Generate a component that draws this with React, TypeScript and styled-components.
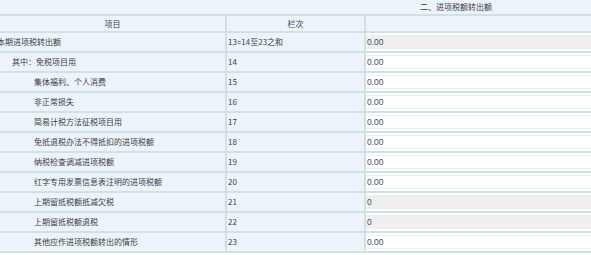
import React from "react";
import styled, { createGlobalStyle } from "styled-components";

const Global = createGlobalStyle`
  html, body { margin: 0; padding: 0; background: #ffffff; overflow: hidden; }
  body { font-family: "Noto Sans CJK SC", "Microsoft YaHei", sans-serif; }
`;

const Page = styled.div`
  width: 591px;
  height: 255px;
  overflow: hidden;
`;

const Table = styled.div`
  width: 912px;
  display: grid;
  grid-template-columns: 227px 139px 1fr;
  font-size: 8px;
  color: #3c3c3c;
  line-height: 1;
`;

const TitleCell = styled.div`
  grid-column: 1 / 4;
  height: 14px;
  border-bottom: 2px solid #cfe2e2;
  background: #edf4fb;
  display: flex;
  align-items: center;
  justify-content: center;
`;

const HeadCell = styled.div<{ $last?: boolean }>`
  height: 15px;
  border-bottom: 2px solid #cfe2e2;
  border-right: ${(p) => (p.$last ? "none" : "2px solid #cfe2e2")};
  background: #edf4fb;
  display: flex;
  align-items: center;
  justify-content: center;
`;

const LabelCell = styled.div<{ $indent: number }>`
  height: 18px;
  border-bottom: 2px solid #cfe2e2;
  border-right: 2px solid #cfe2e2;
  background: #edf4fb;
  display: flex;
  align-items: center;
  padding-left: ${(p) => p.$indent}px;
  white-space: nowrap;
  overflow: hidden;
`;

const NumCell = styled.div`
  height: 18px;
  border-bottom: 2px solid #cfe2e2;
  border-right: 2px solid #cfe2e2;
  background: #edf4fb;
  display: flex;
  align-items: center;
  padding-left: 1px;
`;

const InputCell = styled.div`
  height: 18px;
  border-bottom: 2px solid #cfe2e2;
  background: #ffffff;
  display: flex;
  align-items: center;
`;

const Field = styled.div<{ $readonly?: boolean }>`
  flex: 1;
  height: 14px;
  box-sizing: border-box;
  border-top: 1px solid #e6eff2;
  border-bottom: 1px solid #e6eff2;
  background: ${(p) => (p.$readonly ? "#efefef" : "#ffffff")};
  display: flex;
  align-items: center;
  padding-left: 1px;
  font-family: "Liberation Sans", Arial, sans-serif;
  font-size: 8.5px;
  color: #4a4a55;
`;

type Row = { label: string; indent: number; num: string; value: string; readonly?: boolean };

const rows: Row[] = [
  { label: "本期进项税转出额", indent: 0, num: "13=14至23之和", value: "0.00", readonly: true },
  { label: "其中：免税项目用", indent: 12, num: "14", value: "0.00" },
  { label: "集体福利、个人消费", indent: 34, num: "15", value: "0.00" },
  { label: "非正常损失", indent: 34, num: "16", value: "0.00" },
  { label: "简易计税方法征税项目用", indent: 34, num: "17", value: "0.00" },
  { label: "免抵退税办法不得抵扣的进项税额", indent: 34, num: "18", value: "0.00" },
  { label: "纳税检查调减进项税额", indent: 34, num: "19", value: "0.00" },
  { label: "红字专用发票信息表注明的进项税额", indent: 34, num: "20", value: "0.00" },
  { label: "上期留抵税额抵减欠税", indent: 34, num: "21", value: "0", readonly: true },
  { label: "上期留抵税额退税", indent: 34, num: "22", value: "0", readonly: true },
  { label: "其他应作进项税额转出的情形", indent: 34, num: "23", value: "0.00" },
];

const FirstLabel = styled.span`
  margin-left: -3px;
`;

export default function App() {
  return (
    <Page>
      <Global />
      <Table>
        <TitleCell>二、进项税额转出额</TitleCell>
        <HeadCell>项目</HeadCell>
        <HeadCell>栏次</HeadCell>
        <HeadCell $last />
        {rows.map((r) => (
          <React.Fragment key={r.num}>
            <LabelCell $indent={r.indent}>
              {r.indent === 0 ? <FirstLabel>{r.label}</FirstLabel> : r.label}
            </LabelCell>
            <NumCell>{r.num}</NumCell>
            <InputCell>
              <Field $readonly={r.readonly}>{r.value}</Field>
            </InputCell>
          </React.Fragment>
        ))}
      </Table>
    </Page>
  );
}
